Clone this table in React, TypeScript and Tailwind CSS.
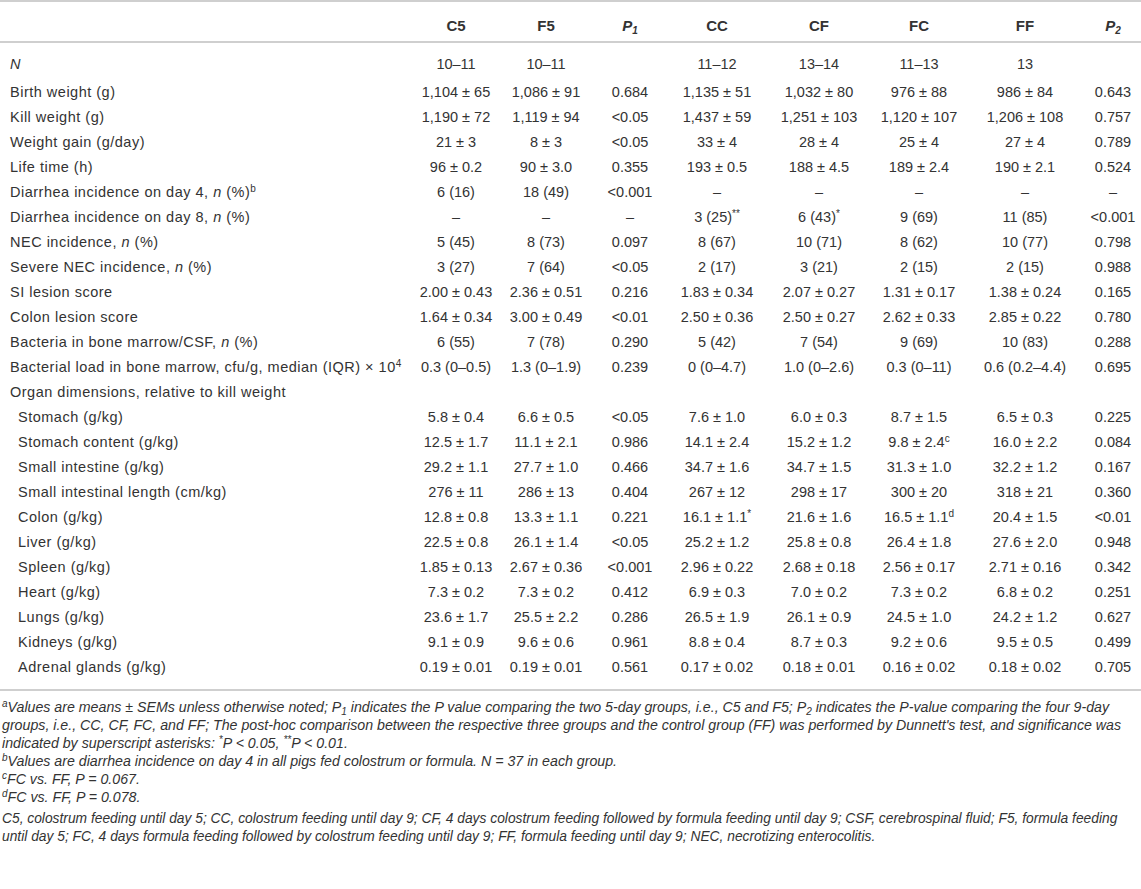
import type { ReactNode } from "react";

type Row = {
  label: ReactNode;
  indent?: boolean;
  values?: ReactNode[];
};

const pm = (a: string, b: string) => `${a} ± ${b}`;
const sup = (s: string) => <sup className="text-[10px] tracking-normal">{s}</sup>;

const rows: Row[] = [
  { label: <i>N</i>, values: ["10–11", "10–11", "", "11–12", "13–14", "11–13", "13", ""] },
  { label: "Birth weight (g)", values: [pm("1,104", "65"), pm("1,086", "91"), "0.684", pm("1,135", "51"), pm("1,032", "80"), pm("976", "88"), pm("986", "84"), "0.643"] },
  { label: "Kill weight (g)", values: [pm("1,190", "72"), pm("1,119", "94"), "<0.05", pm("1,437", "59"), pm("1,251", "103"), pm("1,120", "107"), pm("1,206", "108"), "0.757"] },
  { label: "Weight gain (g/day)", values: [pm("21", "3"), pm("8", "3"), "<0.05", pm("33", "4"), pm("28", "4"), pm("25", "4"), pm("27", "4"), "0.789"] },
  { label: "Life time (h)", values: [pm("96", "0.2"), pm("90", "3.0"), "0.355", pm("193", "0.5"), pm("188", "4.5"), pm("189", "2.4"), pm("190", "2.1"), "0.524"] },
  {
    label: <>Diarrhea incidence on day 4, <i>n</i> (%){sup("b")}</>,
    values: ["6 (16)", "18 (49)", "<0.001", "–", "–", "–", "–", "–"],
  },
  {
    label: <>Diarrhea incidence on day 8, <i>n</i> (%)</>,
    values: ["–", "–", "–", <>3 (25){sup("**")}</>, <>6 (43){sup("*")}</>, "9 (69)", "11 (85)", "<0.001"],
  },
  { label: <>NEC incidence, <i>n</i> (%)</>, values: ["5 (45)", "8 (73)", "0.097", "8 (67)", "10 (71)", "8 (62)", "10 (77)", "0.798"] },
  { label: <>Severe NEC incidence, <i>n</i> (%)</>, values: ["3 (27)", "7 (64)", "<0.05", "2 (17)", "3 (21)", "2 (15)", "2 (15)", "0.988"] },
  { label: "SI lesion score", values: [pm("2.00", "0.43"), pm("2.36", "0.51"), "0.216", pm("1.83", "0.34"), pm("2.07", "0.27"), pm("1.31", "0.17"), pm("1.38", "0.24"), "0.165"] },
  { label: "Colon lesion score", values: [pm("1.64", "0.34"), pm("3.00", "0.49"), "<0.01", pm("2.50", "0.36"), pm("2.50", "0.27"), pm("2.62", "0.33"), pm("2.85", "0.22"), "0.780"] },
  { label: <>Bacteria in bone marrow/CSF, <i>n</i> (%)</>, values: ["6 (55)", "7 (78)", "0.290", "5 (42)", "7 (54)", "9 (69)", "10 (83)", "0.288"] },
  {
    label: <>Bacterial load in bone marrow, cfu/g, median (IQR) × 10{sup("4")}</>,
    values: ["0.3 (0–0.5)", "1.3 (0–1.9)", "0.239", "0 (0–4.7)", "1.0 (0–2.6)", "0.3 (0–11)", "0.6 (0.2–4.4)", "0.695"],
  },
  { label: "Organ dimensions, relative to kill weight" },
  { label: "Stomach (g/kg)", indent: true, values: [pm("5.8", "0.4"), pm("6.6", "0.5"), "<0.05", pm("7.6", "1.0"), pm("6.0", "0.3"), pm("8.7", "1.5"), pm("6.5", "0.3"), "0.225"] },
  {
    label: "Stomach content (g/kg)",
    indent: true,
    values: [pm("12.5", "1.7"), pm("11.1", "2.1"), "0.986", pm("14.1", "2.4"), pm("15.2", "1.2"), <>9.8 ± 2.4{sup("c")}</>, pm("16.0", "2.2"), "0.084"],
  },
  { label: "Small intestine (g/kg)", indent: true, values: [pm("29.2", "1.1"), pm("27.7", "1.0"), "0.466", pm("34.7", "1.6"), pm("34.7", "1.5"), pm("31.3", "1.0"), pm("32.2", "1.2"), "0.167"] },
  { label: "Small intestinal length (cm/kg)", indent: true, values: [pm("276", "11"), pm("286", "13"), "0.404", pm("267", "12"), pm("298", "17"), pm("300", "20"), pm("318", "21"), "0.360"] },
  {
    label: "Colon (g/kg)",
    indent: true,
    values: [pm("12.8", "0.8"), pm("13.3", "1.1"), "0.221", <>16.1 ± 1.1{sup("*")}</>, pm("21.6", "1.6"), <>16.5 ± 1.1{sup("d")}</>, pm("20.4", "1.5"), "<0.01"],
  },
  { label: "Liver (g/kg)", indent: true, values: [pm("22.5", "0.8"), pm("26.1", "1.4"), "<0.05", pm("25.2", "1.2"), pm("25.8", "0.8"), pm("26.4", "1.8"), pm("27.6", "2.0"), "0.948"] },
  { label: "Spleen (g/kg)", indent: true, values: [pm("1.85", "0.13"), pm("2.67", "0.36"), "<0.001", pm("2.96", "0.22"), pm("2.68", "0.18"), pm("2.56", "0.17"), pm("2.71", "0.16"), "0.342"] },
  { label: "Heart (g/kg)", indent: true, values: [pm("7.3", "0.2"), pm("7.3", "0.2"), "0.412", pm("6.9", "0.3"), pm("7.0", "0.2"), pm("7.3", "0.2"), pm("6.8", "0.2"), "0.251"] },
  { label: "Lungs (g/kg)", indent: true, values: [pm("23.6", "1.7"), pm("25.5", "2.2"), "0.286", pm("26.5", "1.9"), pm("26.1", "0.9"), pm("24.5", "1.0"), pm("24.2", "1.2"), "0.627"] },
  { label: "Kidneys (g/kg)", indent: true, values: [pm("9.1", "0.9"), pm("9.6", "0.6"), "0.961", pm("8.8", "0.4"), pm("8.7", "0.3"), pm("9.2", "0.6"), pm("9.5", "0.5"), "0.499"] },
  { label: "Adrenal glands (g/kg)", indent: true, values: [pm("0.19", "0.01"), pm("0.19", "0.01"), "0.561", pm("0.17", "0.02"), pm("0.18", "0.01"), pm("0.16", "0.02"), pm("0.18", "0.02"), "0.705"] },
];

const headers: ReactNode[] = [
  "C5",
  "F5",
  <i key="p1">P<sub className="text-[10px]">1</sub></i>,
  "CC",
  "CF",
  "FC",
  "FF",
  <i key="p2">P<sub className="text-[10px]">2</sub></i>,
];

const fsup = (s: string) => <sup className="text-[10px]">{s}</sup>;

export default function App() {
  return (
    <div className="w-[1141px] bg-white text-[#333] font-['Liberation_Sans',Arial,sans-serif]">
      <div className="h-[2px] bg-[#cfcfcf]" />
      <table className="w-full table-fixed border-collapse">
        <colgroup>
          <col className="w-[411px]" />
          <col className="w-[90px]" />
          <col className="w-[90px]" />
          <col className="w-[78px]" />
          <col className="w-[96px]" />
          <col className="w-[108px]" />
          <col className="w-[92px]" />
          <col className="w-[120px]" />
          <col className="w-[56px]" />
        </colgroup>
        <thead>
          <tr className="h-[40px] border-b-2 border-[#cfcfcf] text-[15px]">
            <th />
            {headers.map((h, i) => (
              <th key={i} className="text-center font-bold pt-[10px]">
                {h}
              </th>
            ))}
          </tr>
        </thead>
        <tbody>
          {rows.map((row, i) => (
            <tr key={i} className={i === 0 ? "h-[38px] align-bottom" : "h-[25px]"}>
              <td
                className={
                  row.indent
                    ? "pl-[18px] whitespace-nowrap text-[14.5px] tracking-[0.5px]"
                    : "pl-[10px] whitespace-nowrap text-[14.5px] tracking-[0.5px]"
                }
              >
                <div className={i === 0 ? "pb-[4px]" : ""}>{row.label}</div>
              </td>
              {(row.values ?? Array(8).fill("")).map((v, j) => (
                <td key={j} className="text-center whitespace-nowrap text-[14.5px]">
                  <div className={i === 0 ? "pb-[4px]" : ""}>{v}</div>
                </td>
              ))}
            </tr>
          ))}
        </tbody>
      </table>
      <div className="mt-[9px] h-[2px] bg-[#cfcfcf]" />
      <div className="pl-[2px] pt-[7px] text-[14.2px] leading-[18px] italic whitespace-nowrap">
        <p>
          {fsup("a")}Values are means ± SEMs unless otherwise noted; <i>P</i>
          <sub className="text-[10px]">1</sub> indicates the <i>P</i> value comparing the two 5-day groups, i.e., C5 and F5;{" "}
          <i>P</i>
          <sub className="text-[10px]">2</sub> indicates the <i>P</i>-value comparing the four 9-day
          <br />
          groups, i.e., CC, CF, FC, and FF; The post-hoc comparison between the respective three groups and the control group (FF)
          was performed by Dunnett's test, and significance was
          <br />
          indicated by superscript asterisks: {fsup("*")}
          <i>P</i> &lt; 0.05, {fsup("**")}
          <i>P</i> &lt; 0.01.
        </p>
        <p>
          {fsup("b")}Values are diarrhea incidence on day 4 in all pigs fed colostrum or formula. N = 37 in each group.
        </p>
        <p>
          {fsup("c")}FC vs. FF, <i>P</i> = 0.067.
        </p>
        <p>
          {fsup("d")}FC vs. FF, <i>P</i> = 0.078.
        </p>
        <p className="mt-[4px] text-[13.8px]">
          C5, colostrum feeding until day 5; CC, colostrum feeding until day 9; CF, 4 days colostrum feeding followed by formula
          feeding until day 9; CSF, cerebrospinal fluid; F5, formula feeding
          <br />
          until day 5; FC, 4 days formula feeding followed by colostrum feeding until day 9; FF, formula feeding until day 9; NEC,
          necrotizing enterocolitis.
        </p>
      </div>
    </div>
  );
}
